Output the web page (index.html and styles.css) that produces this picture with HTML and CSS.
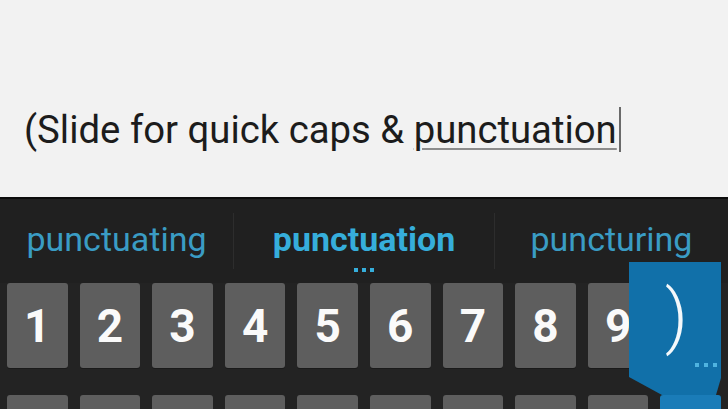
FILE: index.html
```html
<!DOCTYPE html>
<html>
<head>
<meta charset="utf-8">
<link rel="stylesheet" href="styles.css">
</head>
<body>
<div class="editor">
  <div class="line">(Slide for quick caps &amp; <span class="composing">punctuation</span><span class="cursor"></span></div>
</div>
<div class="keyboard">
  <div class="strip">
    <div class="sugg side">punctuating</div>
    <div class="divider"></div>
    <div class="sugg main">punctuation<span class="dots"><i></i><i></i><i></i></span></div>
    <div class="divider"></div>
    <div class="sugg side">puncturing</div>
  </div>
  <div class="row">
    <div class="key">1</div><div class="key">2</div><div class="key">3</div><div class="key">4</div><div class="key">5</div>
    <div class="key">6</div><div class="key">7</div><div class="key">8</div><div class="key">9</div><div class="key">0</div>
  </div>
  <div class="row">
    <div class="key"></div><div class="key"></div><div class="key"></div><div class="key"></div><div class="key"></div>
    <div class="key"></div><div class="key"></div><div class="key"></div><div class="key"></div><div class="key active"></div>
  </div>
  <div class="popup">
    <svg width="94" height="136" viewBox="0 0 94 136">
      <path d="M0 0 H92 V116 L87 133 H33 L0 115 Z" fill="#1170a9"/>
    </svg>
    <span class="paren">)</span>
    <span class="pdots"><i></i><i></i><i></i></span>
  </div>
</div>
</body>
</html>
```

FILE: styles.css
```css
* { box-sizing: border-box; }
html, body { margin: 0; padding: 0; }
body {
  width: 728px;
  height: 409px;
  overflow: hidden;
  background: #f2f2f2;
  font-family: Roboto, "Noto Sans", sans-serif;
}
.editor {
  height: 197px;
  padding: 108px 0 0 24px;
}
.line {
  font-size: 38.3px;
  line-height: 44px;
  color: #1c1c1c;
  display: flex;
  align-items: flex-start;
  white-space: pre;
}
.composing {
  text-decoration: underline;
  text-decoration-color: #8c8c8c;
  text-decoration-thickness: 2px;
  text-underline-offset: 5px;
}
.cursor {
  width: 2px;
  height: 45px;
  margin-left: 2px;
  margin-top: -1px;
  background: #6a6a6a;
}
.keyboard {
  position: relative;
  height: 212px;
  overflow: hidden;
  background: #232323;
  border-top: 2px solid #0c0c0c;
}
.strip {
  height: 84px;
  display: flex;
  align-items: center;
  background: #202020;
}
.sugg {
  text-align: center;
  font-size: 34px;
  color: #3a9cc4;
  position: relative;
  padding-bottom: 4px;
}
.sugg.side { width: 233px; }
.sugg.main {
  flex: 1;
  color: #36aedb;
  font-weight: bold;
}
.divider {
  width: 1px;
  height: 56px;
  background: #2d2d2d;
}
.dots {
  position: absolute;
  left: 50%;
  bottom: -9px;
  transform: translateX(-50%);
  display: flex;
  gap: 4px;
}
.dots i, .pdots i {
  width: 4px;
  height: 4px;
  background: #36aedb;
  display: block;
}
.row {
  display: grid;
  grid-template-columns: repeat(10, 1fr);
  column-gap: 12px;
  padding: 0 7px;
  margin-bottom: 27px;
}
.key {
  height: 85px;
  background: #5e5e5e;
  border-radius: 3px;
  color: #fafafa;
  font-size: 46px;
  font-weight: bold;
  display: flex;
  align-items: center;
  justify-content: center;
  box-shadow: 0 1px 0 #1a1a1a;
}
.key.active { background: #1a7cb8; }
.popup {
  position: absolute;
  left: 629px;
  top: 63px;
  width: 94px;
  height: 136px;
}
.popup svg { position: absolute; left: 0; top: 0; }
.paren {
  position: absolute;
  left: 36px;
  top: 14px;
  font-size: 70px;
  line-height: 80px;
  color: #f4f8fb;
  font-weight: 300;
}
.pdots {
  position: absolute;
  right: 6px;
  top: 101px;
  display: flex;
  gap: 5px;
}
.pdots i { width: 4px; height: 4px; background: #4fb3e0; }
```
